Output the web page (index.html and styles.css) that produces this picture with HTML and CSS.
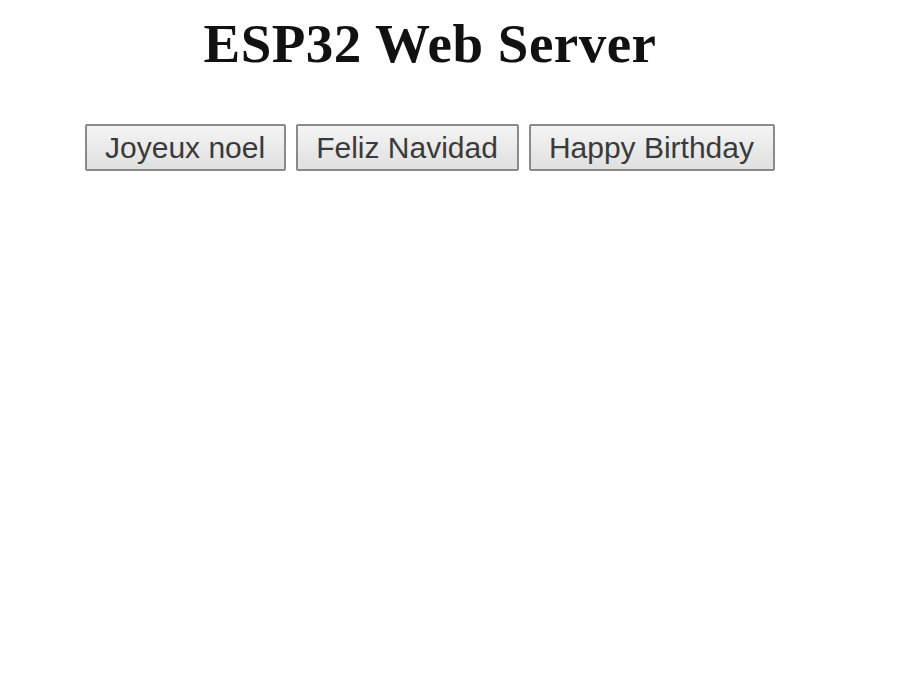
FILE: index.html
```html
<!DOCTYPE html>
<html lang="en">
<head>
  <meta charset="UTF-8" />
  <meta name="viewport" content="width=device-width, initial-scale=1.0"/>
  <title>ESP32 Web Server</title>
  <link rel="stylesheet" href="styles.css">
</head>
<body>
  <div class="page">
    <h1>ESP32 Web Server</h1>
    <div class="buttons">
      <button onclick="fetch('/noel')">Joyeux noel</button>
      <button onclick="fetch('/navidad')">Feliz Navidad</button>
      <button onclick="fetch('/birthday')">Happy Birthday</button>
    </div>
  </div>
</body>
</html>
```

FILE: styles.css
```css
body {
  margin: 0;
  background: #fff;
  font-family: "Liberation Serif", "Times New Roman", serif;
}
.page {
  width: 860px;
  text-align: center;
}
h1 {
  font-size: 55px;
  font-weight: bold;
  color: #111;
  margin: 0;
  padding-top: 12px;
  line-height: 64px;
  letter-spacing: 0.5px;
}
.buttons {
  display: flex;
  justify-content: center;
  gap: 10px;
  margin-top: 48px;
}
button {
  font-family: "Liberation Sans", Arial, sans-serif;
  font-size: 30px;
  color: #3a3a3a;
  height: 47px;
  padding: 0 19px 0 18px;
  background: linear-gradient(#f4f4f4, #e0e0e0);
  border: 2px solid #8a8a8a;
  border-radius: 2px;
  cursor: pointer;
}
button:hover { background: linear-gradient(#eaf4fc, #d8ebf9); }
```
